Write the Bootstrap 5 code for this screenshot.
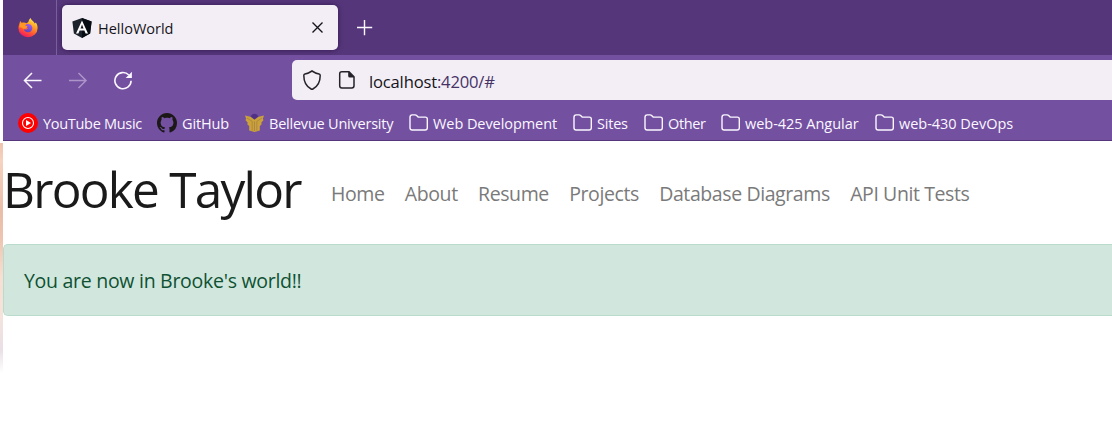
<!DOCTYPE html>
<html lang="en">
<head>
<meta charset="utf-8">
<title>HelloWorld</title>
<meta name="viewport" content="width=device-width, initial-scale=1">
<link href="https://cdn.jsdelivr.net/npm/bootstrap@5.3.0/dist/css/bootstrap.min.css" rel="stylesheet">
<style>
  body { font-family: "Open Sans", "Noto Sans", sans-serif; height: 432px; background: #fff; }
  svg { display: block; flex: none; }
  .desk-edge { width: 3px; padding-top: 143px; }
  .desk-edge div { height: 230px; background: linear-gradient(#efc4ae 0, #f5d3c0 8%, #e9bda8 30%, #edc5b1 42%, #f7dfd2 58%, #f5e4dc 75%, #e9dfe6 90%, #fff 100%); }
  .tab-strip { height: 55px; background: #56367b; }
  .fx-view { width: 54px; border-right: 1px solid #78609a; padding-left: 15px; }
  .page-tab { width: 276px; height: 45px; margin-left: 5px; padding: 0 14px 0 10px; background: #f3eef5; border-radius: 5px; box-shadow: 0 0 5px rgba(25,5,50,.6); color: #15141a; font-size: 14.5px; }
  .tab-title { padding-left: 6px; padding-top: 3px; }
  .new-tab { margin-left: 19px; }
  .tool-area { height: 86px; background: #7350a0; border-bottom: 1px solid #56367b; }
  .tool-row { height: 50px; padding-left: 20px; gap: 25px; }
  .url-box { height: 40px; margin-left: 134px; background: #f3eef5; border-radius: 5px 0 0 5px; padding-left: 10px; font-size: 16.6px; color: #15141a; }
  .url-text { padding: 5px 0 0 12px; letter-spacing: -.18px; }
  .url-box .rest { color: #453267; }
  .marks { height: 35px; padding-left: 15px; color: #fbf7ff; font-size: 14.5px; }
  .bm { gap: 5px; flex: none; white-space: nowrap; height: 20px; line-height: 20px; }
  .bm span { padding-top: 2px; }
  .w-yt { width: 139px; letter-spacing: -.3px; }
  .w-gh { width: 88px; letter-spacing: -.15px; }
  .w-bu { width: 164px; letter-spacing: -.22px; }
  .w-wd { width: 164px; letter-spacing: -.07px; }
  .w-si { width: 71px; letter-spacing: -.2px; }
  .w-ot { width: 77px; letter-spacing: -.4px; }
  .w-an { width: 154px; letter-spacing: -.03px; }
  .site-nav { height: 103px; }
  .site-nav .navbar-brand { font-size: 49.5px; letter-spacing: -1.75px; line-height: 75px; color: #1a1a1a; width: 318px; margin: 0; padding: 0 0 6px; }
  .site-nav .navbar-nav { gap: 20.3px; padding: 3px 0 0 10px; letter-spacing: -.4px; }
  .site-nav .navbar-nav .nav-link { font-size: 19.5px; padding: 0; line-height: 30px; color: #7a7a7a; white-space: nowrap; }
  .world { height: 72px; margin: 0; padding: 2px 20px 0; font-size: 19.5px; background: #d1e7dd; border: 1px solid #badbcc; border-right: 0; border-radius: 5px 0 0 5px; color: #0f5132; letter-spacing: -.28px; }
</style>
</head>
<body class="d-flex overflow-hidden">
<svg width="0" height="0" class="position-absolute">
  <symbol id="folder" viewBox="0 0 20 20"><path d="M1 14.7V4.2Q1 1.9 3.2 1.9H6.1Q7 1.9 7.6 2.5L9.2 4.1H16.3Q18.3 4.1 18.3 6.1V14.7Q18.3 17 16.1 17H3.2Q1 17 1 14.7Z" fill="none" stroke="#fbf7ff" stroke-width="1.4"/></symbol>
</svg>
<div class="desk-edge flex-shrink-0"><div></div></div>
<div class="flex-grow-1 overflow-hidden">
  <header>
    <div class="tab-strip d-flex align-items-center">
      <div class="fx-view h-100 d-flex align-items-center">
        <svg width="20" height="20" viewBox="0 0 20 20">
          <defs>
            <linearGradient id="fox" x1=".8" y1="0" x2=".3" y2="1"><stop offset="0" stop-color="#fff44f"/><stop offset=".4" stop-color="#ff9a22"/><stop offset=".72" stop-color="#ff4f38"/><stop offset="1" stop-color="#f01466"/></linearGradient>
            <linearGradient id="globe" x1=".7" y1="0" x2=".3" y2="1"><stop offset="0" stop-color="#a15df0"/><stop offset="1" stop-color="#5a45ba"/></linearGradient>
          </defs>
          <path d="M12.6 0C13 2.3 16 3.2 16.8 5.6L17.7 4.4C19.2 6.1 19.6 8.1 19.6 10.2A9.6 9 0 0 1 .4 10.2C.4 7.4 1.6 5.6 2.2 3.1L3.8 5.1C5.4 4.3 7.1 4.6 8.4 5.2 9.8 4.9 10.6 4 10.8 2.6Q11.2 1.1 12.6 0Z" fill="url(#fox)"/>
          <path d="M7.2 7.4C9 5 13.4 5.5 14.2 9 14.8 12 12.7 14.3 10.1 14.3 7.8 14.3 5.9 12.9 5.9 11 7.2 12.2 9.2 11.5 10.1 10.2 8.7 10.2 8.7 9.2 9.7 8.4Q8 8.5 7.2 7.4Z" fill="url(#globe)"/>
          <path d="M2.2 5.2Q4.3 4.3 6.5 5.6L6.9 7.4 9.5 8.2Q8 9.1 7.8 10.2L5.6 11Q3.2 8.5 1.2 9.4Z" fill="#ff9724"/>
        </svg>
      </div>
      <div class="page-tab d-flex align-items-center">
        <svg width="20" height="20" viewBox="0 0 20 20">
          <path d="M10 0 19.6 3.5 18.1 15.6 10 20 1.9 15.6.4 3.5Z" fill="#1b222b"/><path d="M10 0 19.6 3.5 18.1 15.6 10 20Z" fill="#080d14"/>
          <path d="M10 2.4 16 15.4H13.6L12.4 12.6H7.6L6.4 15.4H4ZM10 6.5 8.5 10.6H11.5Z" fill="#fff"/>
        </svg>
        <span class="tab-title flex-grow-1">HelloWorld</span>
        <svg width="13" height="13" viewBox="0 0 13 13"><path d="M1.5 1.5 11.5 11.5M11.5 1.5 1.5 11.5" stroke="#15141a" stroke-width="1.35"/></svg>
      </div>
      <svg class="new-tab" width="16" height="16" viewBox="0 0 16 16"><path d="M7.5 0V15.2M0 7.5H15.2" stroke="#fbf7ff" stroke-width="1.4"/></svg>
    </div>
    <div class="tool-area">
      <div class="tool-row d-flex align-items-center">
        <svg width="20" height="20" viewBox="0 0 20 20"><path d="M18.5 10.5H1.5M9 3 1.5 10.5 9 18" fill="none" stroke="#fbf7ff" stroke-width="1.5"/></svg>
        <svg width="20" height="20" viewBox="0 0 20 20"><path d="M1 10.5H18M10.5 3 18 10.5 10.5 18" fill="none" stroke="#ad94c9" stroke-width="1.5"/></svg>
        <svg width="20" height="20" viewBox="0 0 20 20"><path d="M15.8 5A8.1 8.1 0 1 0 18.1 10.8" fill="none" stroke="#fbf7ff" stroke-width="1.6"/><path d="M18.9 1.8V8H12.7Z" fill="#fbf7ff"/></svg>
        <div class="url-box d-flex align-items-center flex-grow-1">
          <svg width="20" height="20" viewBox="0 0 20 20"><path d="M10 1C12.3 2.5 14.7 3.6 17.1 4Q18.2 4.2 18.2 5.4C18.2 11.3 15.9 16.2 10.9 19Q10 19.5 9.1 19C4.1 16.2 1.8 11.3 1.8 5.4Q1.8 4.2 2.9 4C5.3 3.6 7.7 2.5 10 1Z" fill="none" stroke="#252329" stroke-width="1.5"/></svg>
          <svg class="ms-3" width="19" height="20" viewBox="1 0 19 20"><path d="M4.8 1.7H12L17 6.7V15.8Q17 18 14.8 18H4.8Q2.7 18 2.7 15.8V3.8Q2.7 1.7 4.8 1.7Z" fill="none" stroke="#252329" stroke-width="1.5"/><path d="M11.2 1.3V5.9Q11.2 7.4 12.7 7.4H17.4Z" fill="#252329"/></svg>
          <span class="url-text">localhost<span class="rest">:4200/#</span></span>
        </div>
      </div>
      <nav class="marks d-flex align-items-center">
        <div class="bm w-yt d-flex align-items-center">
          <svg width="20" height="20" viewBox="0 0 20 20"><circle cx="10" cy="10" r="10" fill="#f00"/><circle cx="10" cy="10" r="5.5" fill="none" stroke="#fff" stroke-width="1.1"/><path d="M8 7V13L13 10Z" fill="#fff"/></svg><span>YouTube Music</span></div>
        <div class="bm w-gh d-flex align-items-center">
          <svg width="20" height="20" viewBox="0 0 16 16"><path fill="#1b1817" d="M8 0C3.58 0 0 3.58 0 8c0 3.54 2.29 6.53 5.47 7.59.4.07.55-.17.55-.38 0-.19-.01-.82-.01-1.49-2.01.37-2.53-.49-2.69-.94-.09-.23-.48-.94-.82-1.13-.28-.15-.68-.52-.01-.53.63-.01 1.08.58 1.23.82.72 1.21 1.87.87 2.33.66.07-.52.28-.87.51-1.07-1.78-.2-3.64-.89-3.64-3.95 0-.87.31-1.59.82-2.15-.08-.2-.36-1.02.08-2.12 0 0 .67-.21 2.2.82.64-.18 1.32-.27 2-.27s1.36.09 2 .27c1.53-1.04 2.2-.82 2.2-.82.44 1.1.16 1.92.08 2.12.51.56.82 1.27.82 2.15 0 3.07-1.87 3.75-3.65 3.95.29.25.54.73.54 1.48 0 1.07-.01 1.93-.01 2.2 0 .21.15.46.55.38A8.01 8.01 0 0 0 16 8c0-4.42-3.58-8-8-8Z"/></svg><span>GitHub</span></div>
        <div class="bm w-bu d-flex align-items-center">
          <svg width="19" height="20" viewBox="0 0 19 20"><path d="M5.5 3.2Q9.5-1.5 13.5 3.2L9.5 6.5Z" fill="#513184"/><path d="M0 2.4 5.4 3.8 9.5 6.8 13.6 3.8 19 2.4 17.8 6 18.6 7 16.4 9.6 16.6 11.4 14.8 13V17.4L9.5 19 4.2 17.4V13L2.4 11.4 2.6 9.6.4 7 1.2 6Z" fill="#cba238"/><path d="M2 5 7.2 8.4V17.6M17 5 11.8 8.4V17.6M9.5 8.4V18" fill="none" stroke="#9a7650" stroke-width=".6"/></svg><span>Bellevue University</span></div>
        <div class="bm w-wd d-flex align-items-center"><svg width="19" height="20"><use href="#folder" width="20" height="20"/></svg><span>Web Development</span></div>
        <div class="bm w-si d-flex align-items-center"><svg width="19" height="20"><use href="#folder" width="20" height="20"/></svg><span>Sites</span></div>
        <div class="bm w-ot d-flex align-items-center"><svg width="19" height="20"><use href="#folder" width="20" height="20"/></svg><span>Other</span></div>
        <div class="bm w-an d-flex align-items-center"><svg width="19" height="20"><use href="#folder" width="20" height="20"/></svg><span>web-425 Angular</span></div>
        <div class="bm w-an d-flex align-items-center"><svg width="19" height="20"><use href="#folder" width="20" height="20"/></svg><span>web-430 DevOps</span></div>
      </nav>
    </div>
  </header>
  <nav class="site-nav navbar navbar-expand p-0 align-items-center">
    <a class="navbar-brand flex-shrink-0" href="#">Brooke Taylor</a>
    <div class="navbar-nav">
      <a class="nav-link" href="#">Home</a>
      <a class="nav-link" href="#">About</a>
      <a class="nav-link" href="#">Resume</a>
      <a class="nav-link" href="#">Projects</a>
      <a class="nav-link" href="#">Database Diagrams</a>
      <a class="nav-link" href="#">API Unit Tests</a>
    </div>
  </nav>
  <div class="alert world d-flex align-items-center" role="alert">You are now in Brooke's world!!</div>
</div>
<script src="https://cdn.jsdelivr.net/npm/bootstrap@5.3.0/dist/js/bootstrap.bundle.min.js"></script>
</body>
</html>
